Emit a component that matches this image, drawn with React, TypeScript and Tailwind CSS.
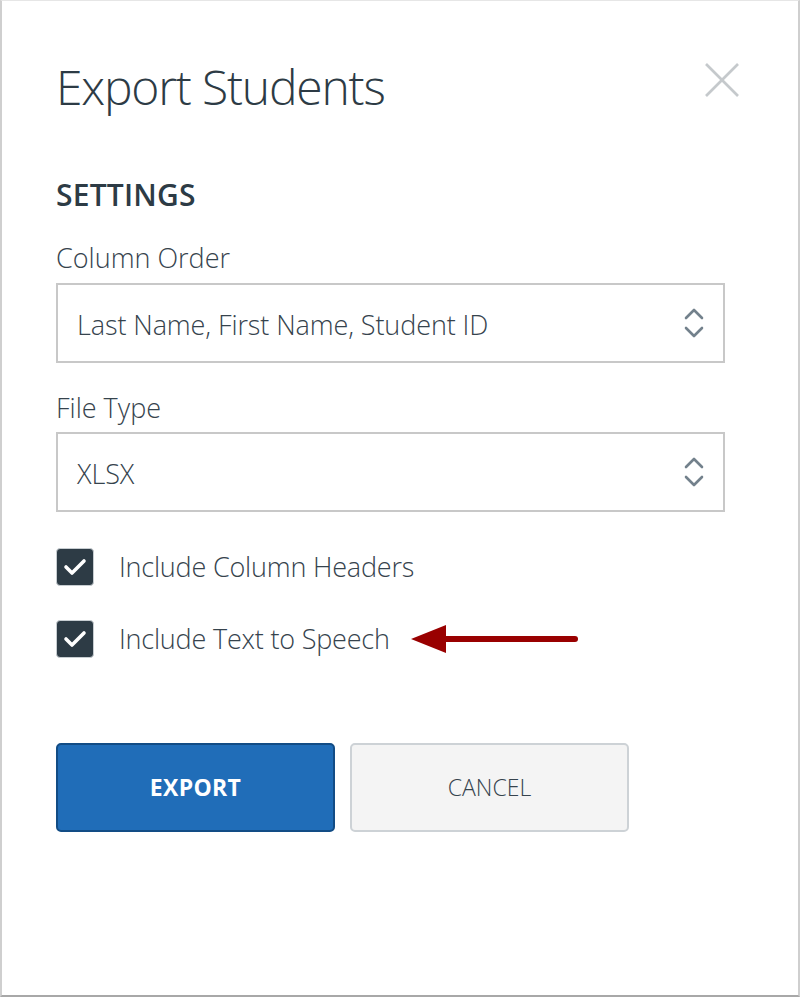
import React from "react";

const light = { fontFamily: '"Open Sans", "Noto Sans", sans-serif', fontWeight: 300 };
const bold = { fontFamily: '"Open Sans", "Noto Sans", sans-serif' };

function Chevrons() {
  return (
    <svg width="22" height="32" viewBox="0 0 22 32" fill="none" stroke="#73818c" strokeWidth="2.6" strokeLinecap="round" strokeLinejoin="round">
      <polyline points="3,11 11,3 19,11" />
      <polyline points="3,21 11,29 19,21" />
    </svg>
  );
}

function Check() {
  return (
    <div className="w-[38px] h-[38px] rounded-[4px] bg-[#2d3b45] border border-[#c7cdd1] flex items-center justify-center shrink-0">
      <svg width="24" height="20" viewBox="0 0 24 20" fill="none" stroke="white" strokeWidth="3.6" strokeLinecap="round" strokeLinejoin="round">
        <polyline points="3,10 9,16 21,4" />
      </svg>
    </div>
  );
}

function Select({ value }: { value: string }) {
  return (
    <div className="w-[669px] h-[80px] border-2 border-[#c8c8c8] flex items-center justify-between pl-[19px] pr-[18px]">
      <span className="text-[27px] text-[#36434d] tracking-[-0.1px] mt-[4px]" style={light}>{value}</span>
      <Chevrons />
    </div>
  );
}

export default function App() {
  return (
    <div className="w-[802px] h-[999px] bg-white">
      <div className="w-[800px] h-[997px] border-l-2 border-r-2 border-b-2 border-t border-l-[#cfcfcf] border-r-[#cfcfcf] border-b-[#a8a8a8] border-t-[#e6e6e6] bg-white relative">
        <div className="pl-[54px] pr-[60px] pt-[56px]">
          <div className="flex items-start justify-between">
            <h1 className="text-[48px] text-[#2d3b45] leading-[60px] tracking-[-1.2px]" style={light}>Export Students</h1>
            <svg className="mt-[6px] -mr-[1px]" width="34" height="34" viewBox="0 0 34 34" stroke="#c5c9cc" strokeWidth="2.6" strokeLinecap="butt">
              <line x1="1" y1="1" x2="33" y2="33" />
              <line x1="33" y1="1" x2="1" y2="33" />
            </svg>
          </div>
          <h2 className="mt-[58px] text-[30px] font-semibold text-[#2d3b45] leading-[40px] tracking-[0.2px]" style={bold}>SETTINGS</h2>
          <div className="mt-[25px] text-[27px] text-[#36434d] leading-[36px]" style={light}>Column Order</div>
          <div className="mt-[7px]">
            <Select value="Last Name, First Name, Student ID" />
          </div>
          <div className="mt-[27px] text-[27px] text-[#36434d] leading-[36px]" style={light}>File Type</div>
          <div className="mt-[6px]">
            <Select value="XLSX" />
          </div>
          <div className="mt-[35px] flex items-center gap-[25px]">
            <Check />
            <span className="text-[27px] text-[#36434d] tracking-[-0.2px]" style={light}>Include Column Headers</span>
          </div>
          <div className="mt-[31px] flex items-center gap-[25px]">
            <Check />
            <span className="text-[27px] text-[#36434d] tracking-[-0.2px]" style={light}>Include Text to Speech</span>
            <svg className="-ml-[4px]" width="168" height="30" viewBox="0 0 168 30">
              <polygon points="0,15 35,1 35,29" fill="#990000" />
              <line x1="34" y1="15" x2="164" y2="15" stroke="#990000" strokeWidth="6" strokeLinecap="round" />
            </svg>
          </div>
          <div className="mt-[84px] flex gap-[15px]">
            <button className="w-[279px] h-[89px] rounded-[5px] bg-[#206db8] border-2 border-[#124c85] text-white text-[23px] font-bold tracking-[0.3px]" style={bold}>EXPORT</button>
            <button className="w-[279px] h-[89px] rounded-[5px] bg-[#f4f4f4] border-2 border-[#cdd2d6] text-[#36434d] text-[23px]" style={light}>CANCEL</button>
          </div>
        </div>
      </div>
    </div>
  );
}
